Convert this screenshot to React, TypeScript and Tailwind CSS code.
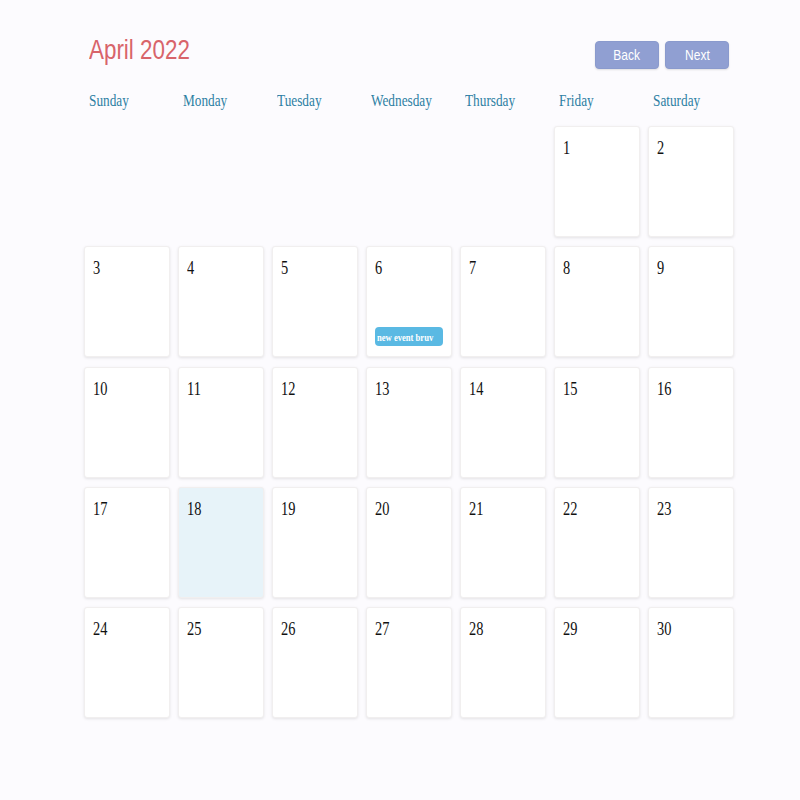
const days = ['Sunday', 'Monday', 'Tuesday', 'Wednesday', 'Thursday', 'Friday', 'Saturday'];

const events: Record<number, string[]> = {
  6: ['new event bruv'],
};

const today = 18;
const firstWeekday = 5; // April 1, 2022 is a Friday
const daysInMonth = 30;

function DayCell({ day }: { day: number }) {
  const isToday = day === today;
  return (
    <div
      className={
        'flex flex-col rounded-[3px] border border-[#f1efef] shadow-[0_1px_3px_rgba(0,0,0,0.10)] ' +
        (isToday ? 'bg-[#e7f3f9]' : 'bg-white')
      }
    >
      <span className="pl-[8px] pt-[12px] text-[18px] leading-[18px] text-[#111111]">
        <span className="inline-block origin-left scale-x-[0.8]">{day}</span>
      </span>
      <div className="mt-auto mb-[10px] flex flex-col gap-1 pl-[8px]">
        {(events[day] ?? []).map((e) => (
          <div
            key={e}
            className="flex h-[19px] w-[68px] items-center overflow-hidden rounded-[4px] bg-[#5ab9e3] pl-[2px] text-[11px] font-bold text-white"
          >
            <span className="inline-block origin-left scale-x-[0.78] whitespace-nowrap">{e}</span>
          </div>
        ))}
      </div>
    </div>
  );
}

export default function App() {
  const cells: (number | null)[] = [];
  for (let i = 0; i < firstWeekday; i++) cells.push(null);
  for (let d = 1; d <= daysInMonth; d++) cells.push(d);

  return (
    <div className="min-h-[800px] bg-[#fcfbfe] font-['Liberation_Serif',serif]">
      <div className="ml-[84px] w-[650px] pt-[36px]">
        <header className="flex items-start justify-between">
          <h1 className="h-[28px] pl-[5px] font-['Liberation_Sans',Arial,sans-serif] text-[28px] leading-[28px] text-[#d8646a]">
            <span className="inline-block origin-left scale-x-[0.8] whitespace-nowrap">April 2022</span>
          </h1>
          <div className="mr-[5px] mt-[5px] flex gap-[6px]">
            {['Back', 'Next'].map((b) => (
              <button
                key={b}
                className="flex h-[28px] w-[64px] items-center justify-center rounded-[4px] border border-[#8a9acd] bg-[#909fd2] font-['Liberation_Sans',Arial,sans-serif] text-[15px] text-white shadow-[0_1px_2px_rgba(0,0,0,0.12)]"
              >
                <span className="inline-block scale-x-[0.8]">{b}</span>
              </button>
            ))}
          </div>
        </header>

        <div className="mt-[20px] grid h-[24px] grid-cols-7 gap-x-[8px]">
          {days.map((d) => (
            <div key={d} className="pl-[5px] text-[16px] leading-[24px] text-[#2d7fa3]">
              <span className="inline-block origin-left scale-x-[0.83] whitespace-nowrap">{d}</span>
            </div>
          ))}
        </div>

        <div className="mt-[13px] grid grid-cols-7 auto-rows-[111px] gap-x-[8px] gap-y-[9.3px]">
          {cells.map((d, i) => (d === null ? <div key={'e' + i} /> : <DayCell key={d} day={d} />))}
        </div>
      </div>
    </div>
  );
}
